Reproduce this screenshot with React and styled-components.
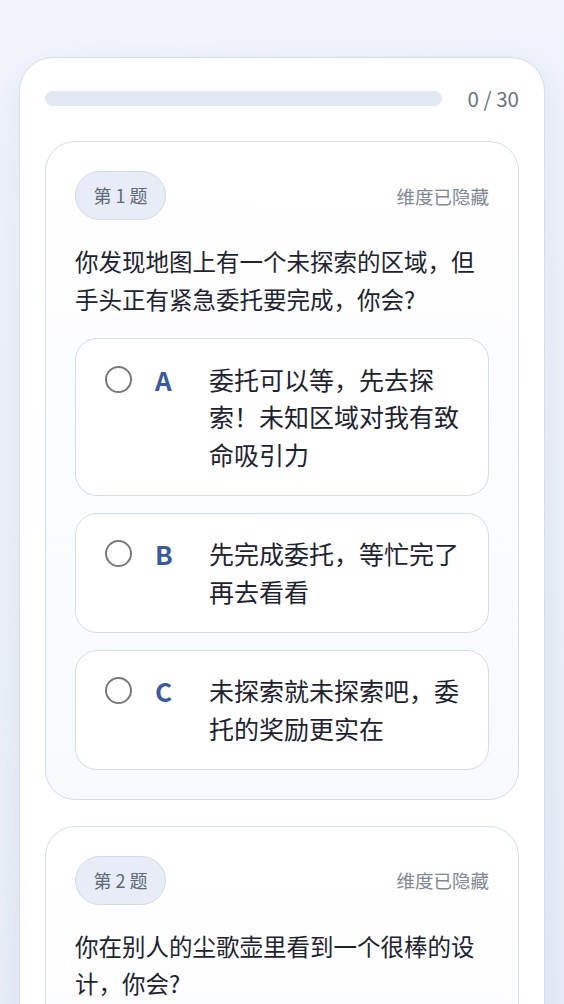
import React from "react";
import styled, { createGlobalStyle } from "styled-components";

const GlobalStyle = createGlobalStyle`
  html, body {
    margin: 0;
    padding: 0;
  }
  body {
    min-height: 100vh;
    background: linear-gradient(165deg, #f1f4fb 0%, #eaeff8 50%, #e4eaf6 100%);
    font-family: "Noto Sans CJK SC", "Noto Sans", sans-serif;
    color: #1e2330;
  }
`;

const Page = styled.div`
  padding: 57px 19px 0;
`;

const Shell = styled.main`
  background: #ffffff;
  border: 1px solid #d5dcea;
  border-radius: 34px;
  padding: 28px 25px 40px;
  box-shadow: 0 12px 36px rgba(40, 60, 110, 0.08);
`;

const ProgressRow = styled.div`
  display: flex;
  align-items: center;
  gap: 26px;
  height: 24px;
`;

const Track = styled.div`
  flex: 1;
  height: 15px;
  border-radius: 999px;
  background: #e2e8f2;
  overflow: hidden;
`;

const Fill = styled.div`
  height: 100%;
  background: #3a5a9c;
`;

const Count = styled.span`
  font-size: 20.5px;
  line-height: 24px;
  color: #6b7380;
  white-space: nowrap;
`;

const List = styled.div`
  display: flex;
  flex-direction: column;
  gap: 26px;
  margin-top: 31px;
`;

const QuestionCard = styled.section`
  border: 1px solid #d5dcea;
  border-radius: 30px;
  padding: 29px;
  background: linear-gradient(180deg, #ffffff 0%, #f7f9fd 100%);
`;

const CardHead = styled.div`
  display: flex;
  align-items: center;
  justify-content: space-between;
`;

const Badge = styled.span`
  display: inline-block;
  padding: 11px 17.5px;
  font-size: 18px;
  line-height: 25px;
  color: #5d6878;
  background: #e7ecf6;
  border: 1px solid #d2dbea;
  border-radius: 999px;
`;

const Hidden = styled.span`
  font-size: 18.5px;
  color: #7f8894;
`;

const Prompt = styled.p`
  margin: 23px 0 0;
  font-size: 23.5px;
  line-height: 37.5px;
  color: #1e2330;
`;

const Options = styled.div`
  display: flex;
  flex-direction: column;
  gap: 17px;
  margin-top: 20px;
`;

const Option = styled.label`
  display: flex;
  align-items: flex-start;
  padding: 21.5px 20px 21.5px 29px;
  background: #ffffff;
  border: 1px solid #d5dcea;
  border-radius: 22px;
  cursor: pointer;
`;

const Radio = styled.span`
  flex: none;
  box-sizing: border-box;
  width: 27px;
  height: 27px;
  margin-top: 5px;
  border: 2px solid #787878;
  border-radius: 50%;
  background: #fff;
`;

const Letter = styled.span`
  flex: none;
  width: 32px;
  margin-left: 23px;
  font-size: 26px;
  font-weight: 700;
  line-height: 37.5px;
  color: #3a5a9c;
`;

const OptionText = styled.span`
  flex: 1;
  margin-left: 22px;
  font-size: 25px;
  line-height: 37.5px;
  color: #1e2330;
`;

const questions = [
  {
    id: 1,
    text: "你发现地图上有一个未探索的区域，但手头正有紧急委托要完成，你会?",
    options: [
      "委托可以等，先去探索！未知区域对我有致命吸引力",
      "先完成委托，等忙完了再去看看",
      "未探索就未探索吧，委托的奖励更实在",
    ],
  },
  {
    id: 2,
    text: "你在别人的尘歌壶里看到一个很棒的设计，你会?",
    options: [
      "马上截图，回去照着做一个",
      "夸一句真好看，然后继续逛",
      "研究一下思路，做出自己的版本",
    ],
  },
];

const App = () => {
  const answered = 0;
  const total = 30;

  return (
    <Page>
      <GlobalStyle />
      <Shell>
        <ProgressRow>
          <Track>
            <Fill style={{ width: `${(answered / total) * 100}%` }} />
          </Track>
          <Count>
            {answered} / {total}
          </Count>
        </ProgressRow>
        <List>
          {questions.map((q) => (
            <QuestionCard key={q.id}>
              <CardHead>
                <Badge>第 {q.id} 题</Badge>
                <Hidden>维度已隐藏</Hidden>
              </CardHead>
              <Prompt>{q.text}</Prompt>
              <Options>
                {q.options.map((opt, i) => (
                  <Option key={i}>
                    <Radio />
                    <Letter>{"ABC"[i]}</Letter>
                    <OptionText>{opt}</OptionText>
                  </Option>
                ))}
              </Options>
            </QuestionCard>
          ))}
        </List>
      </Shell>
    </Page>
  );
};

export default App;
